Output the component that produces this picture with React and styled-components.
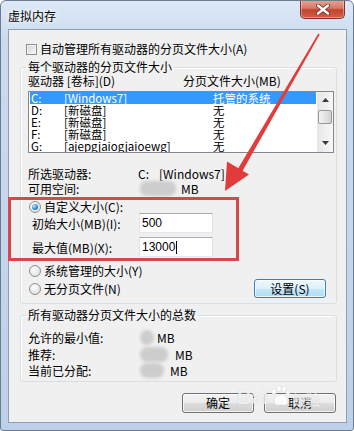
import React from 'react'
import styled, { createGlobalStyle } from 'styled-components'

const GlobalStyle = createGlobalStyle`
  html, body { margin:0; padding:0; background:#fff; }
  body {
    font-family: "Noto Sans CJK SC", "Liberation Sans", sans-serif;
    font-size: 12px;
    color: #000;
  }
`

const Window = styled.div`
  position: relative;
  width: 354px;
  height: 431px;
  box-sizing: border-box;
  display: flex;
  flex-direction: column;
  border: 1px solid #6b7c91;
  border-radius: 6px 6px 3px 3px;
  background: linear-gradient(#dde9f6, #c9dbef 40px, #bcd1e9);
  overflow: hidden;
`

const TitleBar = styled.div`
  height: 28px;
  display: flex;
  justify-content: space-between;
  padding-left: 7px;
`

const Title = styled.div`
  align-self: center;
  margin-top: 2px;
  font-size: 12px;
  line-height: 14px;
  color: #000;
  text-shadow: 0 0 6px #fff, 0 0 3px #fff;
`

const CloseButton = styled.div`
  width: 45px;
  height: 19px;
  margin: -1px 8px 0 0;
  box-sizing: border-box;
  border: 1px solid #7f3328;
  border-top: none;
  border-radius: 0 0 5px 5px;
  background: linear-gradient(#e9a696 0%, #d7786a 45%, #c2432f 55%, #d35f44 100%);
  box-shadow: inset 0 0 0 1px rgba(255,255,255,0.35);
  display: flex;
  align-items: center;
  justify-content: center;
`

const Client = styled.div`
  margin: 0 6px 7px 7px;
  height: 394px;
  box-sizing: border-box;
  border: 1px solid #8e9fb3;
  background: #f0f0f0;
  display: flex;
  flex-direction: column;
`

const CheckRow = styled.div`
  margin-top: 13px;
  padding-left: 17px;
  height: 12px;
  display: flex;
  align-items: center;
  gap: 3px;
  line-height: 12px;
  white-space: nowrap;
`

const CheckBox = styled.span`
  width: 11px;
  height: 11px;
  box-sizing: border-box;
  border: 1px solid #8f8f8f;
  background: linear-gradient(135deg, #d6d6d6, #f6f6f6);
  box-shadow: inset 0 0 0 1px #f4f4f4;
`

const Group = styled.fieldset`
  margin: ${p => p.$top}px 9px 0 11px;
  padding: 0 0 ${p => p.$bottom}px 7px;
  border: 1px solid #d5dfe5;
  border-radius: 3px;
  box-shadow: inset 1px 1px 0 #fff;
  min-width: 0;
  display: flex;
  flex-direction: column;
`

const Legend = styled.legend`
  margin-left: -2px;
  padding: 0 2px;
  line-height: 14px;
  font-size: 12px;
`

const HeaderRow = styled.div`
  margin-top: 1px;
  display: grid;
  grid-template-columns: 155px auto;
  height: 12px;
  line-height: 12px;
  white-space: nowrap;
`

const ListBox = styled.div`
  margin-top: 4px;
  width: 306px;
  height: 62px;
  box-sizing: border-box;
  border: 1px solid #828790;
  background: #fff;
  display: flex;
  overflow: hidden;
`

const Rows = styled.div`
  flex: 1;
  padding: 0 1px;
  overflow: hidden;
`

const Row = styled.div`
  display: grid;
  grid-template-columns: 33px 149px 1fr;
  height: 12px;
  line-height: 12px;
  font-size: 11.5px;
  padding-left: 1px;
  white-space: nowrap;
  background: ${p => (p.$selected ? '#3399ff' : 'transparent')};
  color: ${p => (p.$selected ? '#fff' : '#000')};
`

const ScrollBar = styled.div`
  width: 16px;
  display: flex;
  flex-direction: column;
  align-items: center;
  background: linear-gradient(90deg, #e6e6e6, #f7f7f7);
`

const ScrollArrow = styled.div`
  height: 15px;
  width: 16px;
  display: flex;
  align-items: center;
  justify-content: center;
  margin-top: ${p => (p.$down ? 'auto' : '0')};
  margin-bottom: ${p => (p.$down ? '2px' : '0')};
`

const Thumb = styled.div`
  margin-top: 3px;
  width: 14px;
  height: 14px;
  box-sizing: border-box;
  border: 1px solid #979797;
  border-radius: 2px;
  background: linear-gradient(90deg, #f4f4f4, #e0e0e0 60%, #d2d2d2);
`

const InfoRow = styled.div`
  margin-top: ${p => p.$mt}px;
  display: grid;
  grid-template-columns: ${p => p.$col}px auto;
  height: 12px;
  line-height: 12px;
  white-space: nowrap;
  align-items: center;
`

const Value = styled.span`
  display: flex;
  align-items: center;
`

const Gap = styled.span`
  display: inline-block;
  width: ${p => p.$w}px;
`

const Smudge = styled.span`
  display: inline-block;
  width: ${p => p.$w}px;
  height: 15px;
  margin-left: ${p => p.$ml || 0}px;
  margin-right: ${p => p.$gap}px;
  border-radius: 7px;
  background: #cdcdcd;
  filter: blur(1.5px);
`

const RadioRow = styled.div`
  margin-top: ${p => p.$mt}px;
  padding-left: 1px;
  height: ${p => p.$h || 12}px;
  display: flex;
  align-items: center;
  gap: 3px;
  line-height: 12px;
  white-space: nowrap;
`

const Radio = styled.span`
  width: 12px;
  height: 12px;
  box-sizing: border-box;
  border-radius: 50%;
  border: 1px solid #8e8f8f;
  background: radial-gradient(circle at 40% 35%, #ffffff, #e2e2e2 70%, #cfcfcf);
  display: flex;
  align-items: center;
  justify-content: center;
  &::after {
    content: '';
    display: ${p => (p.$checked ? 'block' : 'none')};
    width: 6px;
    height: 6px;
    border-radius: 50%;
    background: radial-gradient(circle at 35% 35%, #b9eaff, #2f8fd6 55%, #18598f);
  }
`

const Spacer = styled.div`
  flex: 1;
`

const FieldRow = styled.div`
  margin-top: ${p => p.$mt}px;
  padding-left: 4px;
  height: 20px;
  display: grid;
  grid-template-columns: 107px 74px;
  align-items: center;
  white-space: nowrap;
`

const TextBox = styled.div`
  width: 74px;
  height: 20px;
  box-sizing: border-box;
  border: 1px solid #abadb3;
  border-color: #abadb3 #dbdfe6 #e3e9ef #e2e3ea;
  background: #fff;
  padding-left: 2px;
  display: flex;
  align-items: center;
  font: 12px/14px "Liberation Sans", Arial, sans-serif;
  color: #000;
`

const Caret = styled.span`
  display: inline-block;
  width: 1px;
  height: 13px;
  background: #000;
  margin-left: 1px;
`

const Button = styled.div`
  width: 72px;
  height: ${p => p.$h}px;
  box-sizing: border-box;
  border: 1px solid ${p => (p.$hot ? '#3c7fb1' : '#707070')};
  border-radius: 3px;
  background: ${p =>
    p.$hot
      ? 'linear-gradient(#ecf7fd 0%, #ddf1fc 50%, #c5e7f8 50%, #b1dcf3 100%)'
      : 'linear-gradient(#f2f2f2 0%, #ebebeb 50%, #dddddd 50%, #cfcfcf 100%)'};
  box-shadow: inset 0 0 0 1px rgba(255,255,255,0.75);
  display: flex;
  align-items: center;
  justify-content: center;
  margin-right: ${p => p.$mr || 0}px;
  line-height: 12px;
`

const ButtonRow = styled.div`
  margin: 11px 10px 0 0;
  display: flex;
  justify-content: flex-end;
  gap: 10px;
`

const Annotation = styled.div`
  position: absolute;
  left: 7px;
  top: 196px;
  width: 231px;
  height: 64px;
  box-sizing: border-box;
  border: 3px solid #d94848;
  pointer-events: none;
`

const ArrowLayer = styled.svg`
  position: absolute;
  left: -1px;
  top: -1px;
  pointer-events: none;
`

const Watermark = styled.div`
  position: absolute;
  left: 236px;
  top: 384px;
  display: flex;
  align-items: flex-end;
  gap: 1px;
  font: bold 20px/20px "Liberation Sans", Arial, sans-serif;
  color: rgba(255,255,255,0.75);
  text-shadow: 0 0 1px rgba(0,0,0,0.18);
  pointer-events: none;
  span {
    font: bold 14px/16px "Noto Sans CJK SC", sans-serif;
  }
`

const drives = [
  { d: 'C:', label: '[Windows7]', size: '托管的系统', sel: true },
  { d: 'D:', label: '[新磁盘]', size: '无' },
  { d: 'E:', label: '[新磁盘]', size: '无' },
  { d: 'F:', label: '[新磁盘]', size: '无' },
  { d: 'G:', label: '[ajepgjaiogjaioewg]', size: '无' },
]

export default function App() {
  return (
    <>
      <GlobalStyle />
      <Window>
        <TitleBar>
          <Title>虚拟内存</Title>
          <CloseButton>
            <svg width="14" height="11" viewBox="0 0 14 11">
              <path d="M2 1.5 L12 9.5 M12 1.5 L2 9.5" stroke="#6a2a22" strokeWidth="4" strokeLinecap="round" />
              <path d="M2 1.5 L12 9.5 M12 1.5 L2 9.5" stroke="#fff" strokeWidth="2.4" strokeLinecap="round" />
            </svg>
          </CloseButton>
        </TitleBar>

        <Client>
          <CheckRow>
            <CheckBox />
            自动管理所有驱动器的分页文件大小(A)
          </CheckRow>

          <Group $top={5} $bottom={5}>
            <Legend>每个驱动器的分页文件大小</Legend>
            <HeaderRow>
              <span>驱动器 [卷标](D)</span>
              <span>分页文件大小(MB)</span>
            </HeaderRow>
            <ListBox>
              <Rows>
                {drives.map(r => (
                  <Row key={r.d} $selected={r.sel}>
                    <span>{r.d}</span>
                    <span>{r.label}</span>
                    <span>{r.size}</span>
                  </Row>
                ))}
              </Rows>
              <ScrollBar>
                <ScrollArrow>
                  <svg width="7" height="4" viewBox="0 0 7 4"><path d="M0 4 L3.5 0 L7 4 Z" fill="#3b3b3b" /></svg>
                </ScrollArrow>
                <Thumb />
                <ScrollArrow $down>
                  <svg width="7" height="4" viewBox="0 0 7 4"><path d="M0 0 L3.5 4 L7 0 Z" fill="#3b3b3b" /></svg>
                </ScrollArrow>
              </ScrollBar>
            </ListBox>

            <InfoRow $mt={15} $col={110}>
              <span>所选驱动器:</span>
              <Value>C:<Gap $w={10} />[Windows7]</Value>
            </InfoRow>
            <InfoRow $mt={1} $col={110}>
              <span>可用空间:</span>
              <Value><Smudge $w={36} $ml={2} $gap={5} />MB</Value>
            </InfoRow>

            <RadioRow $mt={8}>
              <Radio $checked />
              自定义大小(C):
            </RadioRow>
            <FieldRow $mt={0}>
              <span>初始大小(MB)(I):</span>
              <TextBox>500</TextBox>
            </FieldRow>
            <FieldRow $mt={4}>
              <span>最大值(MB)(X):</span>
              <TextBox>13000<Caret /></TextBox>
            </FieldRow>

            <RadioRow $mt={8}>
              <Radio />
              系统管理的大小(Y)
            </RadioRow>
            <RadioRow $mt={2} $h={19}>
              <Radio />
              无分页文件(N)
              <Spacer />
              <Button $hot $h={19} $mr={10}>设置(S)</Button>
            </RadioRow>
          </Group>

          <Group $top={4} $bottom={6}>
            <Legend>所有驱动器分页文件大小的总数</Legend>
            <InfoRow $mt={8} $col={112}>
              <span>允许的最小值:</span>
              <Value><Smudge $w={14} $gap={3} />MB</Value>
            </InfoRow>
            <InfoRow $mt={5} $col={112}>
              <span>推荐:</span>
              <Value><Smudge $w={28} $gap={7} />MB</Value>
            </InfoRow>
            <InfoRow $mt={4} $col={112}>
              <span>当前已分配:</span>
              <Value><Smudge $w={24} $gap={6} />MB</Value>
            </InfoRow>
          </Group>

          <ButtonRow>
            <Button $h={20}>确定</Button>
            <Button $h={20}>取消</Button>
          </ButtonRow>
        </Client>

        <Annotation />
        <Watermark>
          Bai<svg width="22" height="22" viewBox="0 0 22 22">
            <g fill="rgba(255,255,255,0.8)" stroke="rgba(0,0,0,0.12)" strokeWidth="0.6">
              <ellipse cx="5" cy="7" rx="2.4" ry="3" />
              <ellipse cx="10" cy="3.5" rx="2.4" ry="3" />
              <ellipse cx="15" cy="4" rx="2.4" ry="3" />
              <ellipse cx="19" cy="8" rx="2.2" ry="2.8" />
              <path d="M5 17 C5 12 9 9.5 12 9.5 C15 9.5 19 12 19 17 C19 20 16 21 12 20 C8 21 5 20 5 17 Z" />
            </g>
          </svg><span>经验</span>
        </Watermark>
        <ArrowLayer width="354" height="431" viewBox="0 0 354 431">
          <polygon points="319.7,34.4 318.3,33.6 236.8,170.7 241.2,173.3" fill="#e23b3b" />
          <polygon points="225,191 249,174.5 227,161.5" fill="#e23b3b" />
        </ArrowLayer>
      </Window>
    </>
  )
}
